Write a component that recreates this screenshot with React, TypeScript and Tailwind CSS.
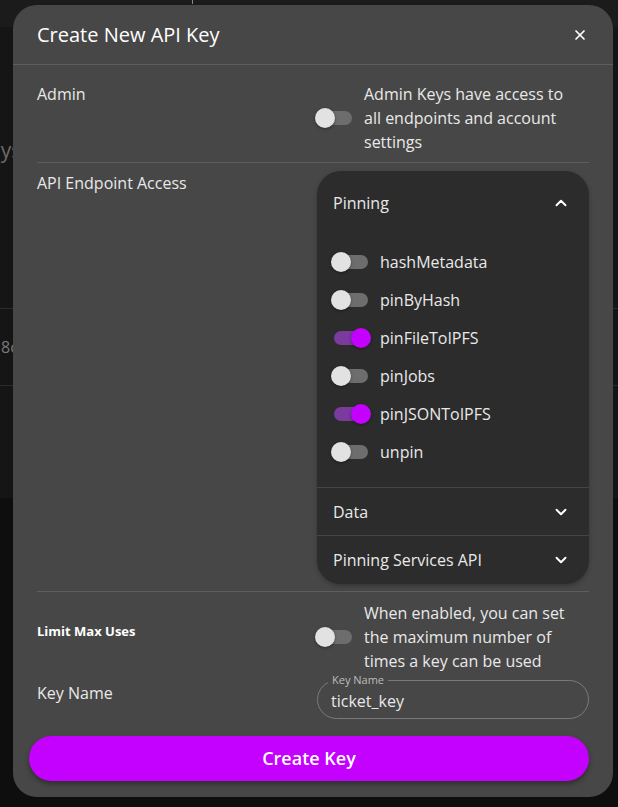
import { X, ChevronUp, ChevronDown } from "lucide-react";

const font = { fontFamily: "'Open Sans', Lato, sans-serif" };

function Toggle({ on = false }: { on?: boolean }) {
  return (
    <span className="relative inline-flex h-5 w-[40px] shrink-0 items-center">
      <span
        className={
          on
            ? "ml-[3px] h-[14px] w-[34px] rounded-full bg-[#7b3a9d]"
            : "ml-[3px] h-[14px] w-[34px] rounded-full bg-[#6d6d6d]"
        }
      />
      <span
        className={
          on
            ? "absolute left-[20px] top-0 size-5 rounded-full bg-[#c400ff] shadow-[0_1px_3px_rgba(0,0,0,0.4)]"
            : "absolute left-0 top-0 size-5 rounded-full bg-[#e2e2e2] shadow-[0_1px_3px_rgba(0,0,0,0.4)]"
        }
      />
    </span>
  );
}

const endpoints = [
  { name: "hashMetadata", on: false },
  { name: "pinByHash", on: false },
  { name: "pinFileToIPFS", on: true },
  { name: "pinJobs", on: false },
  { name: "pinJSONToIPFS", on: true },
  { name: "unpin", on: false },
];

function Backdrop() {
  return (
    <div className="flex h-full flex-col">
      <div className="relative h-[27px] bg-[#1b1b1b]">
        <span className="absolute left-[192px] top-0 h-[4px] w-px bg-[#8a8a8a]" />
      </div>
      <div className="flex h-[471px] flex-col bg-[#151515]">
        <div className="h-[109px]" />
        <div className="flex h-[30px] items-center">
          <span className="-ml-[24px] text-[21px] text-[#6a6a6a]">Keys</span>
        </div>
        <div className="h-[142px]" />
        <div className="flex h-[78px] items-center border-y border-[#2a2a2a]">
          <span className="ml-px text-[16px] text-[#7a7a7a]">8c5f</span>
        </div>
      </div>
      <div className="flex-1 bg-[#0e0e0e]" />
    </div>
  );
}

function Modal() {
  return (
    <div className="absolute left-[13px] top-[5px] flex h-[792px] w-[600px] flex-col rounded-[24px] bg-[#474747] text-[#e9e9e9]">
      <div className="flex h-[60px] items-center justify-between border-b border-[#5d5d5d] pl-[24px] pr-[25px]">
        <h2 className="text-[20px] font-medium text-white">Create New API Key</h2>
        <X size={16} strokeWidth={2.6} className="text-white" />
      </div>

      <div className="flex flex-col px-[24px]">
        <div className="grid grid-cols-[278px_1fr] border-b border-[#5d5d5d] pb-[8px] pt-[17px] text-[16px] leading-[24px]">
          <div>Admin</div>
          <div className="flex items-center gap-[9px]">
            <Toggle />
            <span className="w-[212px]">Admin Keys have access to all endpoints and account settings</span>
          </div>
        </div>

        <div className="grid grid-cols-[280px_1fr] border-b border-[#5d5d5d] pb-[7px] pt-[8px] text-[16px] leading-[24px]">
          <div>API Endpoint Access</div>
          <div className="overflow-hidden rounded-[24px] bg-[#2c2c2c] shadow-[0_2px_4px_rgba(0,0,0,0.25)]">
            <div className="flex h-[64px] items-center justify-between pl-[16px] pr-[19px]">
              <span>Pinning</span>
              <ChevronUp size={18} strokeWidth={2.6} className="text-white" />
            </div>
            <div className="flex flex-col px-[14px] pb-[16px] pt-[8px]">
              {endpoints.map((e) => (
                <div key={e.name} className="flex h-[38px] items-center gap-[9px]">
                  <Toggle on={e.on} />
                  <span>{e.name}</span>
                </div>
              ))}
            </div>
            <div className="flex h-[48px] items-center justify-between border-t border-[#454545] pl-[16px] pr-[19px]">
              <span>Data</span>
              <ChevronDown size={18} strokeWidth={2.6} className="text-white" />
            </div>
            <div className="flex h-[49px] items-center justify-between border-t border-[#454545] pl-[16px] pr-[19px]">
              <span>Pinning Services API</span>
              <ChevronDown size={18} strokeWidth={2.6} className="text-white" />
            </div>
          </div>
        </div>

        <div className="grid grid-cols-[278px_1fr] items-center pt-[9px] text-[16px] leading-[24px]">
          <div className="pb-[12px] text-[13px] font-bold text-white">Limit Max Uses</div>
          <div className="flex items-center gap-[9px]">
            <Toggle />
            <span>When enabled, you can set the maximum number of times a key can be used</span>
          </div>
        </div>

        <div className="mt-[7px] grid grid-cols-[280px_1fr] items-center text-[16px]">
          <div className="pb-[14px]">Key Name</div>
          <div className="relative flex h-[39px] items-center rounded-full border border-[#7a7a7a] pl-[13px]">
            <span className="absolute -top-[8px] left-[10px] bg-[#474747] px-[4px] text-[11px] leading-[14px] text-[#bdbdbd]">
              Key Name
            </span>
            <span className="pt-[2px]">ticket_key</span>
          </div>
        </div>

        <button className="-ml-[8px] mt-[17px] h-[45px] w-[560px] rounded-full bg-[#c400ff] text-[18px] font-semibold text-white shadow-[0_3px_5px_rgba(0,0,0,0.35)]">
          Create Key
        </button>
      </div>
    </div>
  );
}

export default function App() {
  return (
    <div className="relative h-[807px] w-[618px] overflow-hidden bg-[#0e0e0e]" style={font}>
      <Backdrop />
      <Modal />
    </div>
  );
}
